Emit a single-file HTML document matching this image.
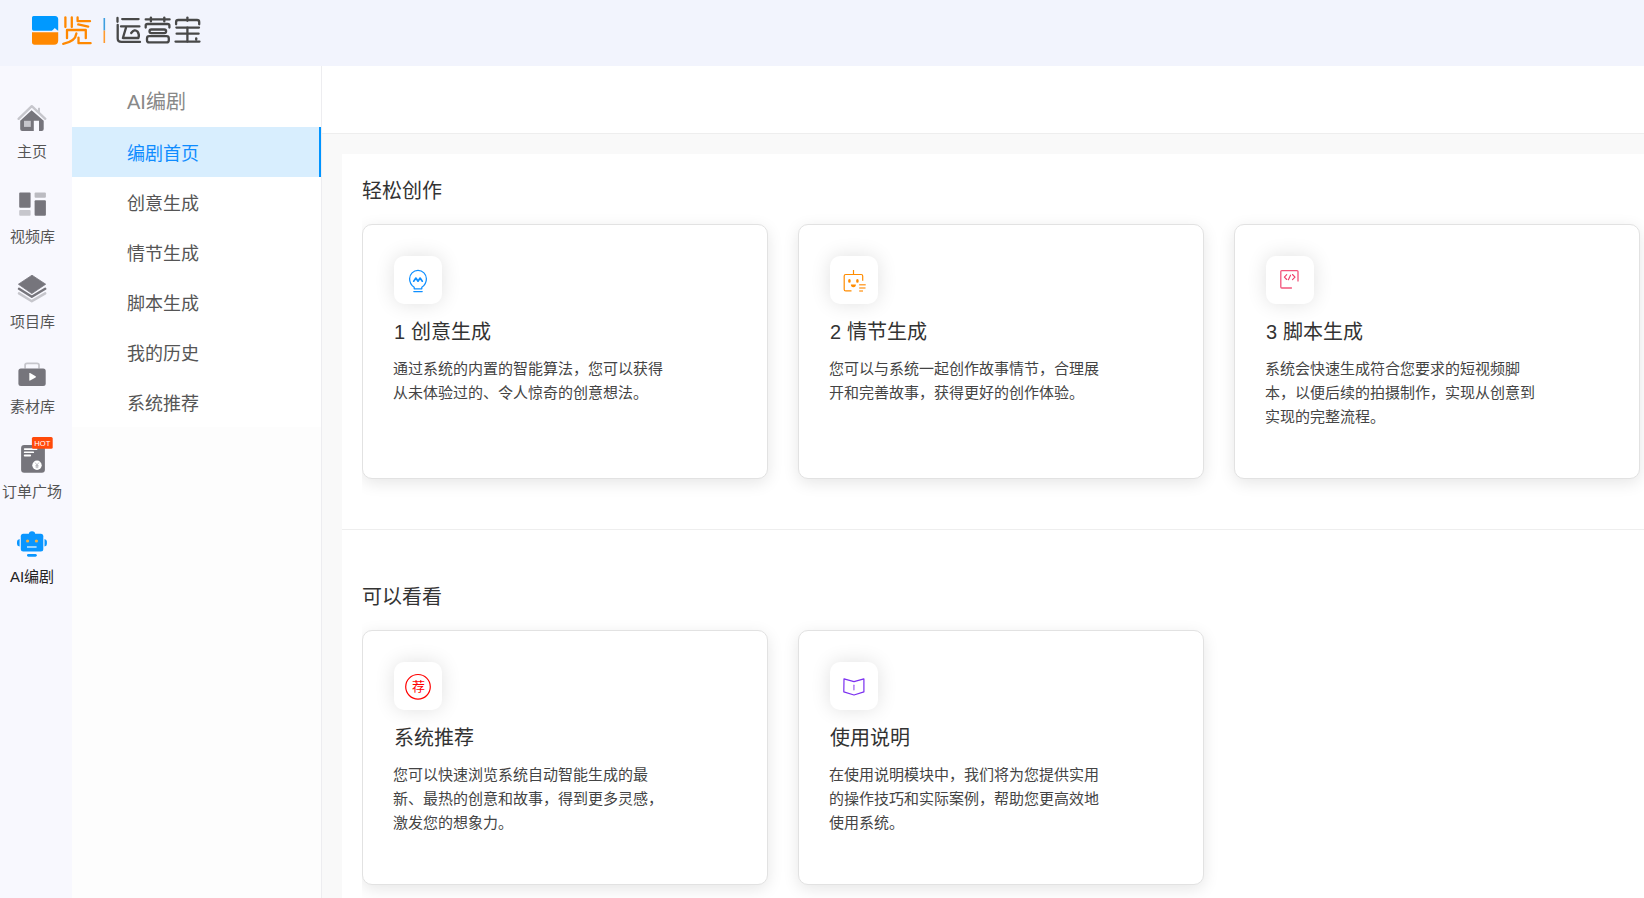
<!DOCTYPE html>
<html lang="zh-CN">
<head>
<meta charset="utf-8">
<style>
*{box-sizing:border-box;margin:0;padding:0}
html,body{width:1644px;height:898px;overflow:hidden;background:#fff;font-family:"Liberation Sans",sans-serif;}
.header{position:absolute;left:0;top:0;width:1644px;height:66px;background:#f2f4fd;}
.rail{position:absolute;left:0;top:66px;width:72px;height:832px;background:#f8f8fe;}
.sub{position:absolute;left:72px;top:66px;width:250px;height:832px;background:#fdfdfd;border-right:1px solid #ededf0;}
.subtop{position:absolute;left:0;top:0;width:249px;height:361px;background:#fff;}
.main{position:absolute;left:322px;top:66px;width:1322px;height:832px;background:#f9f9f9;}
.topbar{position:absolute;left:0;top:0;width:1322px;height:68px;background:#fff;border-bottom:1px solid #eee;}
.panel{position:absolute;left:20px;top:88px;width:1302px;height:760px;background:#fff;}
.clip{position:absolute;left:362px;width:1282px;overflow:hidden}
.sec-title{position:absolute;font-size:20px;color:#333;line-height:22px;white-space:nowrap}
.card{position:absolute;width:406px;height:255px;background:#fff;border:1px solid #e2e2e2;border-radius:10px;box-shadow:0 4px 16px rgba(0,0,0,.1);}
.ibox{position:absolute;left:31px;top:31px;width:48px;height:48px;background:#fff;border-radius:10px;box-shadow:0 0 20px rgba(0,0,0,.12);}
.ibox svg{position:absolute;left:0;top:0}
.ctitle{position:absolute;left:31px;top:95px;font-size:20px;line-height:24px;color:#333;white-space:nowrap}
.cdesc{position:absolute;left:30px;top:132px;white-space:nowrap;font-size:15px;line-height:24px;color:#444;}
.menu-item{position:absolute;left:0;width:249px;height:50px;font-size:18px;line-height:50px;color:#555;padding-left:55px;padding-top:1.5px;white-space:nowrap}
.rail-item{position:absolute;left:0;width:64px;text-align:center;font-size:15px;color:#555;white-space:nowrap}
</style>
</head>
<body>
<div class="header">
</div>
<div class="rail">
  <div class="rail-item" style="top:73.5px">主页</div>
  <div class="rail-item" style="top:158.5px">视频库</div>
  <div class="rail-item" style="top:243.5px">项目库</div>
  <div class="rail-item" style="top:328.5px">素材库</div>
  <div class="rail-item" style="top:413.5px">订单广场</div>
  <div class="rail-item" style="top:498.5px;color:#222">AI编剧</div>
</div>
<div class="sub">
  <div class="subtop">
    <div class="menu-item" style="top:9.5px;color:#888;font-size:20px">AI编剧</div>
    <div class="menu-item" style="top:61px;background:#d8eefe;color:#0f8cff;border-right:2px solid #0094ff">编剧首页</div>
    <div class="menu-item" style="top:111px">创意生成</div>
    <div class="menu-item" style="top:161px">情节生成</div>
    <div class="menu-item" style="top:211px">脚本生成</div>
    <div class="menu-item" style="top:261px">我的历史</div>
    <div class="menu-item" style="top:311px">系统推荐</div>
  </div>
</div>
<div class="main">
  <div class="topbar"></div>
  <div class="panel"></div>
</div>
<div class="divider" style="position:absolute;left:342px;top:529px;width:1302px;height:1px;background:#eee"></div>
<div class="sec-title" style="left:362px;top:180px">轻松创作</div>
<div class="sec-title" style="left:362px;top:586px">可以看看</div>

<div class="clip" style="top:214px;height:300px">
<div class="card" style="left:0px;top:10px">
  <div class="ibox"></div>
  <div class="ctitle">1 创意生成</div>
  <div class="cdesc">通过系统的内置的智能算法，您可以获得<br>从未体验过的、令人惊奇的创意想法。</div>
</div>
<div class="card" style="left:436px;top:10px">
  <div class="ibox"></div>
  <div class="ctitle">2 情节生成</div>
  <div class="cdesc">您可以与系统一起创作故事情节，合理展<br>开和完善故事，获得更好的创作体验。</div>
</div>
<div class="card" style="left:872px;top:10px">
  <div class="ibox"></div>
  <div class="ctitle">3 脚本生成</div>
  <div class="cdesc">系统会快速生成符合您要求的短视频脚<br>本，以便后续的拍摄制作，实现从创意到<br>实现的完整流程。</div>
</div>
</div>
<div class="clip" style="top:620px;height:278px">
<div class="card" style="left:0px;top:10px">
  <div class="ibox"></div>
  <div class="ctitle">系统推荐</div>
  <div class="cdesc">您可以快速浏览系统自动智能生成的最<br>新、最热的创意和故事，得到更多灵感，<br>激发您的想象力。</div>
</div>
<div class="card" style="left:436px;top:10px">
  <div class="ibox"></div>
  <div class="ctitle">使用说明</div>
  <div class="cdesc">在使用说明模块中，我们将为您提供实用<br>的操作技巧和实际案例，帮助您更高效地<br>使用系统。</div>
</div>

</div>
<svg id="ov" width="1644" height="898" viewBox="0 0 1644 898" style="position:absolute;left:0;top:0;pointer-events:none">
 <!-- logo square -->
 <path d="M33.5 16 H55 Q58.2 16 58.2 19.5 V30.7 H33.5 Q32 30.7 32 29 V17.5 Q32 16 33.5 16Z" fill="#0099ff"/>
 <path d="M51.8 30.9 L54.8 28 L58.4 31.2Z" fill="#f2f4fd"/>
 <path d="M32 32.2 H58.2 V40.5 Q58.2 44.7 54 44.7 H34.5 Q32 44.7 32 42Z" fill="#ff8800"/>
 <!-- 览 -->
 <g stroke="#ff8800" stroke-width="2.3" fill="none" stroke-linecap="round" stroke-linejoin="round">
  <path d="M65.4 17.4 V27"/><path d="M71.8 17.4 V27"/>
  <path d="M77.6 17.4 V21.2 H90"/><path d="M78.2 24.4 L88.2 26.6"/>
  <path d="M67 38.2 V30 H85.8 V38.2"/>
  <path d="M76.4 33.4 Q75.5 41.5 63.2 43.8"/>
  <path d="M78.5 37.6 V43.2 H90.6"/>
 </g>
 <!-- divider -->
 <rect x="103.5" y="18" width="1.6" height="12.5" fill="#3d9ee0"/>
 <rect x="103.5" y="30.5" width="1.6" height="12.5" fill="#ff9a2e"/>
 <!-- 运营宝 -->
 <g stroke="#484848" stroke-width="2.3" fill="none" stroke-linecap="round" stroke-linejoin="round">
  <path d="M117.5 18 V21.8"/><path d="M122.2 19.1 H138.6"/><path d="M121 26.4 H139.4"/>
  <path d="M126 27.6 L122.9 38 H138.4 Q139.8 35 137.5 31.5 Q134.5 28.5 131.2 33"/>
  <path d="M117.7 24.8 V38.5 Q117.7 41.9 121.5 41.9 H140"/>
  <path d="M145.7 19.4 H169.6"/><path d="M150.9 17.6 V21.4"/><path d="M164.3 17.6 V21.4"/>
  <path d="M145.7 27.6 V25.5 Q145.7 24 147.5 24 H167.6 Q169.4 24 169.4 25.5 V27.6"/>
  <rect x="149.5" y="29.5" width="16.6" height="3.6" rx="1.8"/>
  <rect x="147" y="36.2" width="21.8" height="6.2" rx="2.2"/>
  <path d="M187.4 17.6 V20.8"/>
  <path d="M176.1 24.3 V22 Q176.1 20 178.3 20 H197 Q199.2 20 199.2 22 V24.3"/>
  <path d="M176.4 27.6 H199"/><path d="M176.6 33.7 H198.6"/><path d="M175.5 41.6 H199.5"/><path d="M187.4 27.6 V41.6"/>
  <path d="M196.2 38.3 V39.8"/>
 </g>
 <!-- rail: house -->
 <path d="M18.6 118.8 L31.8 106.2 L45.3 118.8" stroke="#c6c6cc" stroke-width="2.4" fill="none" stroke-linecap="round" stroke-linejoin="round"/>
 <rect x="38" y="107.8" width="2" height="5" fill="#c6c6cc"/>
 <path d="M20.2 120.8 L31.6 110.2 L43.7 120.8 V129 Q43.7 130.9 41.8 130.9 H39 V120.8 H33.8 V130.9 H22.1 Q20.2 130.9 20.2 129Z" fill="#76757c"/>
 <rect x="24" y="120.8" width="6.8" height="6.1" fill="#c6c6cc"/>
 <!-- rail: video lib -->
 <rect x="19.2" y="192.4" width="11.4" height="15.4" rx="1" fill="#76757c"/>
 <rect x="19.2" y="210" width="11.4" height="5.7" rx="1" fill="#c6c6cc"/>
 <rect x="34.6" y="192.4" width="11.3" height="5.4" rx="1" fill="#bbbbc1"/>
 <rect x="34.6" y="200.2" width="11.3" height="15.5" rx="1" fill="#76757c"/>
 <!-- rail: project lib -->
 <path d="M18.4 284.2 L32 275.2 L45.7 284.2 L31.8 293.6Z" fill="#76757c" stroke="#76757c" stroke-width="0.8" stroke-linejoin="round"/>
 <path d="M19 288.8 L31.8 296.8 L45.2 288.8" stroke="#76757c" stroke-width="2.5" fill="none" stroke-linecap="round" stroke-linejoin="round"/>
 <path d="M19 293.4 L31.8 301.2 L45.2 293.4" stroke="#c6c6cc" stroke-width="2.5" fill="none" stroke-linecap="round" stroke-linejoin="round"/>
 <!-- rail: material -->
 <path d="M25.1 368.6 V365 Q25.1 363.3 27 363.3 H37 Q39 363.3 39 365 V368.6" stroke="#c6c6cc" stroke-width="1.8" fill="none"/>
 <rect x="18.4" y="368.4" width="27.3" height="17.5" rx="2.5" fill="#76757c"/>
 <path d="M29.3 373.5 Q29.3 372.6 30.1 373 L35.6 376.2 Q36.3 376.8 35.6 377.4 L30.1 380.6 Q29.3 381 29.3 380.1Z" fill="#fff"/>
 <!-- rail: order -->
 <rect x="21.1" y="445" width="23.8" height="27.7" rx="3" fill="#76757c"/>
 <rect x="23.8" y="448.2" width="13.7" height="1.8" rx="0.9" fill="#fff"/>
 <rect x="23.8" y="451.4" width="10.3" height="1.7" rx="0.85" fill="#fff"/>
 <rect x="23.8" y="454.6" width="7.3" height="1.8" rx="0.9" fill="#fff"/>
 <circle cx="37" cy="465.3" r="4.7" fill="#fff"/>
 <path d="M35.2 462.6 L37 465 L38.8 462.6 M37 465 V468.3 M35.4 465.6 H38.6 M35.4 467 H38.6" stroke="#9a9aa0" stroke-width="0.65" fill="none"/>
 <rect x="31.9" y="437.1" width="20.8" height="11.6" rx="1.5" fill="#ff4a0a"/>
 <text x="42.3" y="446" font-family="Liberation Sans" font-size="7.6" fill="#fff" text-anchor="middle">HOT</text>
 <!-- rail: robot -->
 <rect x="20.8" y="533.8" width="22.5" height="17.7" rx="2.5" fill="#0a96ff"/>
 <path d="M28.8 534.5 A3.2 3.2 0 0 1 35.2 534.5Z" fill="#0a96ff"/>
 <path d="M19.6 539 V546.6 Q17 546 17 544 V541.5 Q17 539.5 19.6 539Z" fill="#0a96ff"/>
 <path d="M44.5 539 V546.6 Q46.9 546 46.9 544 V541.5 Q46.9 539.5 44.5 539Z" fill="#0a96ff"/>
 <circle cx="27.6" cy="541" r="1.6" fill="#f5b041"/>
 <circle cx="36.4" cy="541" r="1.6" fill="#f5b041"/>
 <rect x="27" y="546.2" width="9.6" height="1.6" fill="#b9e1ff"/>
 <rect x="27" y="554" width="9.8" height="2.7" rx="1.35" fill="#0a96ff"/>
 <!-- card icon 1: bulb -->
 <g stroke="#0f8fff" stroke-width="1.25" fill="none" stroke-linejoin="round" stroke-linecap="round">
  <path d="M414.2 288.8 V287.3 Q409.6 284.2 409.6 278.8 A8.4 8.4 0 0 1 426.4 278.8 Q426.4 284.2 421.8 287.3 V288.8 Z"/>
  <path d="M413.8 291.6 H422.2"/>
  <path d="M413.7 281.2 L415.9 278.1 L418 281.2 L420.1 278.1 L422.3 281.2" stroke-width="1.7"/>
 </g>
 <!-- card icon 2: robot face -->
 <g stroke="#ff8c00" stroke-width="1.2" fill="none" stroke-linecap="butt" stroke-linejoin="round">
  <path d="M853.5 270 V274.5"/>
  <path d="M851.5 290.9 H845.7 Q844.2 290.9 844.2 289.4 V276 Q844.2 274.5 845.7 274.5 H861.2 Q862.7 274.5 862.7 276 V280.8"/>
  <path d="M859.2 284.7 H865.7 M859.2 287.9 H865.5 M859.2 291.1 H863" stroke-width="1.5" stroke="#ffa640"/>
 </g>
 <ellipse cx="849.4" cy="280.9" rx="1.3" ry="1.9" fill="#ff8c00"/>
 <ellipse cx="857.4" cy="280.9" rx="1.3" ry="1.9" fill="#ff8c00"/>
 <path d="M850.9 284.5 H855.9 Q855.9 287.3 853.4 287.3 Q850.9 287.3 850.9 284.5Z" fill="#ff8c00"/>
 <!-- card icon 3: code -->
 <g stroke="#f0416c" stroke-width="1.3" fill="none" stroke-linecap="butt" stroke-linejoin="round">
  <path d="M1298 281.4 V271.6 Q1298 270.6 1297 270.6 H1281.8 Q1280.8 270.6 1280.8 271.6 V287 Q1280.8 288 1281.8 288 H1291.9" stroke="#f2557c"/>
  <path d="M1286.7 274.7 L1284.4 277.2 L1286.7 279.5 M1290.5 275.2 L1288.4 279.7 M1292.5 274.5 L1295 277.2 L1292.5 279.7" stroke-linecap="round" stroke-width="1.15"/>
 </g>
 <!-- card icon 4: 荐 -->
 <circle cx="418" cy="686.8" r="12.3" stroke="#ff0000" stroke-width="1.2" fill="none"/>
 <text x="418" y="691" font-family="Liberation Sans" font-size="13" fill="#ff0000" text-anchor="middle">荐</text>
 <!-- card icon 5: book -->
 <g stroke="#7b2ff0" stroke-width="1.2" fill="none" stroke-linejoin="round" stroke-linecap="round">
  <path d="M844 678.8 L854 681.6 L863.9 678.8 V691.9 L854 695 L843.8 691.9Z"/>
  <path d="M853.9 685.2 V689.8" stroke="#b07df5" stroke-width="1.5"/>
 </g>
</svg>
</body>
</html>
